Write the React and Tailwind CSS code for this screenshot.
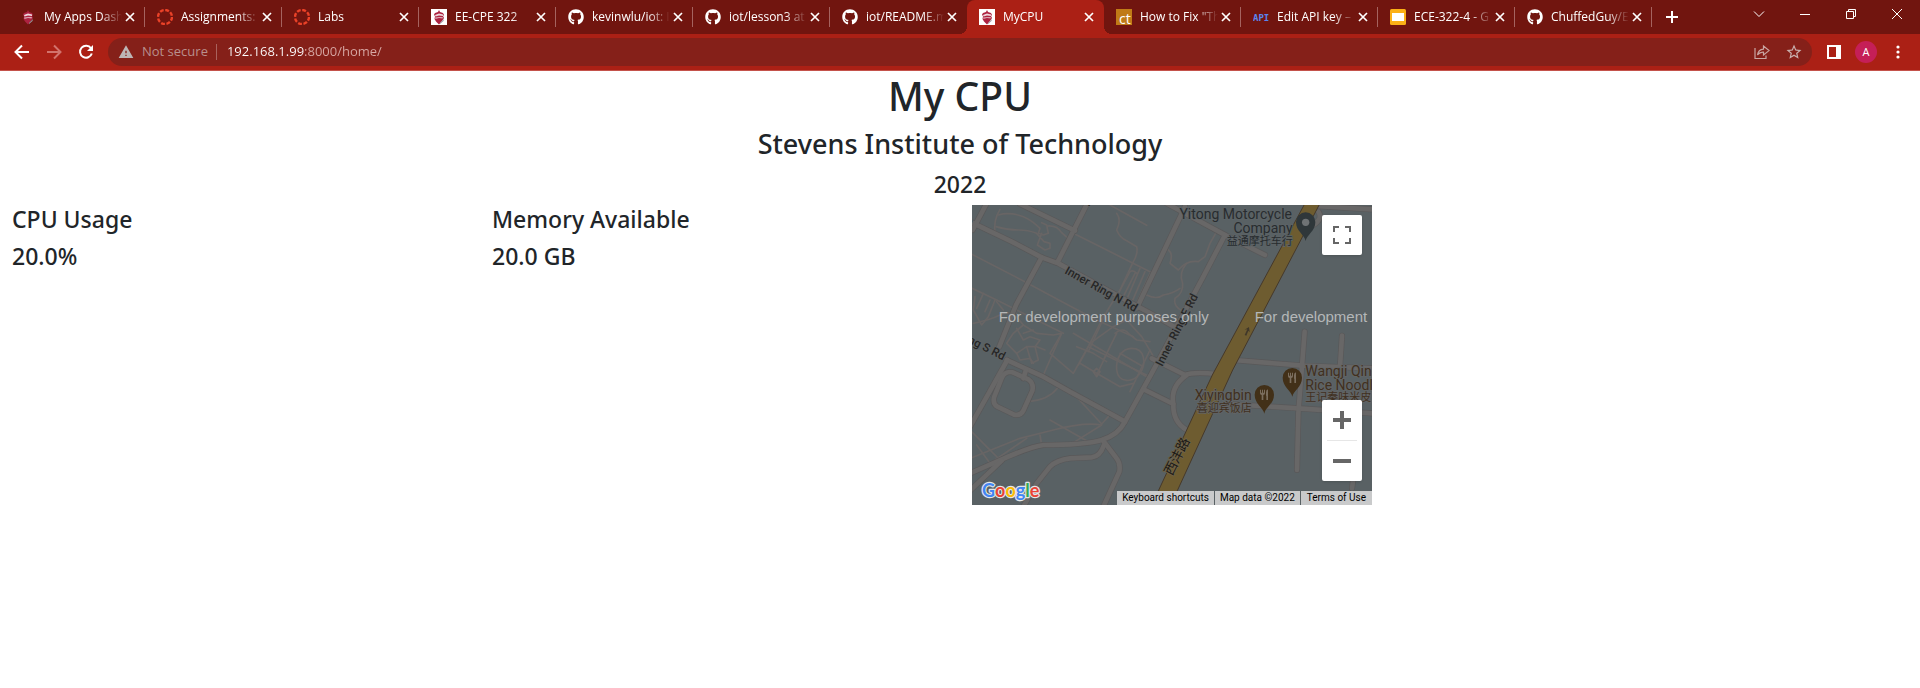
import { FaGithub } from "react-icons/fa";
import { MdWarning, MdStarBorder } from "react-icons/md";

const tabs = [
  { title: "My Apps Dash", icon: "shield" },
  { title: "Assignments:", icon: "canvas" },
  { title: "Labs", icon: "canvas" },
  { title: "EE-CPE 322", icon: "stevens" },
  { title: "kevinwlu/iot: I", icon: "github" },
  { title: "iot/lesson3 at", icon: "github" },
  { title: "iot/README.m", icon: "github" },
  { title: "MyCPU", icon: "stevens", active: true },
  { title: 'How to Fix "Th', icon: "ct" },
  { title: "Edit API key –", icon: "api" },
  { title: "ECE-322-4 - G", icon: "slides" },
  { title: "ChuffedGuy/E", icon: "github" },
];

function Crest() {
  return (
    <>
      <path d="M8 1 9 3 12 4 13 6 12 7 13 9 11 12 8 15.500 5 12.500 3.500 10 4 7.500 3 5.500 4 4 7 3Z" fill="#ad2240" />
      <path d="M4 6 8 4.500 12 5.500 12 7 8 6.500 4.500 7.500Z" fill="#efd9dd" />
      <path d="M4 8.500 8 8 12 8 11.500 9.500 8 9 4.500 10Z" fill="#d9a3ae" />
      <path d="M9 14 13 10 12.500 12 9 15Z" fill="#9a9ca3" />
    </>
  );
}

function Favicon({ kind }) {
  if (kind === "github") return <FaGithub className="size-4 shrink-0 text-white" aria-hidden="true" />;
  return (
    <svg viewBox="0 0 16 16" className="size-4 shrink-0" aria-hidden="true">
      {kind === "shield" && <Crest />}
      {kind === "stevens" && (
        <>
          <rect width="16" height="16" fill="#fff" />
          <Crest />
        </>
      )}
      {kind === "canvas" && (
        <circle cx="8" cy="8" r="7" fill="none" stroke="#ea4228" strokeWidth="2.400" strokeDasharray="3.900 1.600" />
      )}
      {kind === "ct" && (
        <>
          <rect width="16" height="16" fill="#c07a17" />
          <text x="3" y="15" fontSize="14" fill="#fff" fontFamily="Open Sans, sans-serif">ct</text>
        </>
      )}
      {kind === "api" && (
        <text x="0" y="12" fontSize="9" fontWeight="700" fill="#5a85ee" fontFamily="DejaVu Sans Mono, monospace">API</text>
      )}
      {kind === "slides" && (
        <>
          <rect width="16" height="16" rx="1.500" fill="#fbb016" />
          <rect x="2" y="4" width="12" height="8" fill="#fff" />
        </>
      )}
    </svg>
  );
}

function Tab({ title, icon, active, divided }) {
  return (
    <div
      role="tab"
      aria-selected={!!active}
      className={
        active
          ? "relative flex h-full w-[137px] items-center rounded-t-lg bg-[#ab2015] pr-[7px] pl-3"
          : "relative flex h-full w-[137px] items-center pr-[7px] pl-3"
      }
    >
      <Favicon kind={icon} />
      <span className="ml-2 flex-1 overflow-hidden text-xs whitespace-nowrap [mask-image:linear-gradient(to_right,black_72%,transparent)]">
        {title}
      </span>
      <button type="button" aria-label={"Close " + title} className="flex size-4 shrink-0 items-center justify-center">
        <svg viewBox="0 0 10 10" className="size-[10px]">
          <path d="M1 1 9 9M9 1 1 9" stroke="#fff" strokeWidth="1.700" />
        </svg>
      </button>
      {divided && <span className="absolute top-[7px] right-0 h-5 w-px bg-[#a5635f]" />}
      {active && (
        <>
          <span className="absolute bottom-0 -left-2 size-2 bg-[radial-gradient(circle_at_0_0,transparent_8px,#ab2015_8px)]" />
          <span className="absolute -right-2 bottom-0 size-2 bg-[radial-gradient(circle_at_100%_0,transparent_8px,#ab2015_8px)]" />
        </>
      )}
    </div>
  );
}

function WindowButton({ label, children }) {
  return (
    <button type="button" aria-label={label} className="flex h-7 w-[46px] items-center justify-center">
      <svg viewBox="0 0 12 12" className="size-3" fill="none" stroke="#fff" strokeWidth="1">
        {children}
      </svg>
    </button>
  );
}

function TabStrip() {
  return (
    <div className="flex h-[34px] bg-[#71150f] pl-2">
      <div role="tablist" className="flex">
        {tabs.map((t, i) => (
          <Tab key={i} {...t} divided={!t.active && !(tabs[i + 1] && tabs[i + 1].active)} />
        ))}
      </div>
      <button type="button" aria-label="New tab" className="flex w-10 items-center justify-center">
        <svg viewBox="0 0 12 12" className="size-3">
          <path d="M6 0V12M0 6H12" stroke="#fff" strokeWidth="2" />
        </svg>
      </button>
      <div className="ml-auto flex">
        <WindowButton label="Search tabs"><path d="M1 3.500 6 8.500 11 3.500" /></WindowButton>
        <WindowButton label="Minimize"><path d="M1 6.500H11" /></WindowButton>
        <WindowButton label="Restore">
          <path d="M1.500 3.500h7v7h-7zM3.500 3.500v-2h7v7h-2" />
        </WindowButton>
        <WindowButton label="Close window"><path d="M1 1 11 11M11 1 1 11" /></WindowButton>
      </div>
    </div>
  );
}

function Toolbar() {
  return (
    <div className="flex h-[37px] items-center border-b border-[#c4524b] bg-[#ab2015] px-[6px]">
      <button type="button" aria-label="Back" className="flex size-8 items-center justify-center">
        <svg viewBox="0 0 16 16" className="size-4" fill="none" stroke="#fff" strokeWidth="2">
          <path d="M15 8H2M8 1.500 1.500 8 8 14.500" />
        </svg>
      </button>
      <button type="button" aria-label="Forward" className="flex size-8 items-center justify-center">
        <svg viewBox="0 0 16 16" className="size-4" fill="none" stroke="#d2736c" strokeWidth="2">
          <path d="M1 8H14M8 1.500 14.500 8 8 14.500" />
        </svg>
      </button>
      <button type="button" aria-label="Reload" className="flex size-8 items-center justify-center">
        <svg viewBox="0 0 16 16" className="size-4" fill="none" stroke="#fff" strokeWidth="2">
          <path d="M13 4.300A6 6 0 1 0 13.800 9.500" />
          <path d="M15 1V7H9Z" fill="#fff" stroke="none" />
        </svg>
      </button>
      <div className="ml-[6px] flex h-7 flex-1 items-center rounded-full bg-[#852019] pr-[2px] pl-[10px]">
        <MdWarning className="size-4 text-[#bdb5b5]" aria-hidden="true" />
        <span className="ml-2 text-[13px] text-[#b98f8c]">Not secure</span>
        <span className="mr-[10px] ml-2 h-4 w-px bg-[#a9625d]" />
        <input
          type="text"
          aria-label="Address"
          defaultValue="192.168.1.99:8000/home/"
          className="min-w-0 flex-1 bg-[linear-gradient(to_right,#fff_78px,#d8a9a5_78px)] bg-clip-text text-[13px] text-transparent outline-none"
        />
        <button type="button" aria-label="Share" className="flex size-8 items-center justify-center">
          <svg viewBox="0 0 16 16" className="size-4" fill="none" stroke="#c9a5a2" strokeWidth="1.200">
            <path d="M1 4V14.500H12V11.500" />
            <path d="M3.500 11C4 7.500 6 5.500 9.500 5.200V2L15 6.600 9.500 11V8.200C7 8 5 9 3.500 11Z" />
          </svg>
        </button>
        <button type="button" aria-label="Bookmark this tab" className="flex size-8 items-center justify-center">
          <MdStarBorder className="size-[18px] text-[#c9b0ae]" />
        </button>
      </div>
      <button type="button" aria-label="Side panel" className="ml-[6px] flex size-8 items-center justify-center">
        <svg viewBox="0 0 14 14" className="size-[14px]">
          <path d="M0 0H14V14H0ZM2 2V12H9V2Z" fill="#fff" fillRule="evenodd" />
        </svg>
      </button>
      <button type="button" aria-label="Profile" className="mx-[5px] flex size-[22px] items-center justify-center rounded-full bg-[#c51f57] text-[11px] text-white">
        A
      </button>
      <button type="button" aria-label="Menu" className="flex size-8 items-center justify-center">
        <svg viewBox="0 0 4 14" className="h-[14px] w-1" fill="#fff">
          <circle cx="2" cy="2" r="1.600" />
          <circle cx="2" cy="7" r="1.600" />
          <circle cx="2" cy="12" r="1.600" />
        </svg>
      </button>
    </div>
  );
}

const wideRoads = [
  "M0 65 125 125 215 172 265 190 500 318 560 350 615 382",
  "M50 10 8 90",
  "M352 10 262 188",
  "M215 172 138 315 88 440",
  "M150 12 315 92",
  "M645 20 500 325",
  "M590 10 765 105 885 165",
  "M765 105 700 230 545 520 465 665Q445 705 395 720Q345 735 220 735 180 740 80 785L0 820",
  "M110 480 220 530 300 575 465 665",
  "M112 480 0 680",
  "M398 720 440 775Q452 790 448 815L400 920",
  "M402 735Q390 770 365 772L300 775Q260 780 240 800L200 850 160 920",
  "M95 782 0 872",
  "M128 517 175 538Q192 550 187 572L160 632Q152 648 132 644L82 620Q68 612 72 592L96 532Q106 512 128 517Z",
  "M160 535 168 510",
  "M545 475 645 525Q670 515 740 522",
  "M525 570 610 612",
  "M650 525Q600 560 610 612 608 665 650 690",
  "M790 480 1000 497 1206 505",
  "M790 613 985 625 1206 640",
  "M1004 395 985 640 981 810",
  "M1116 407 1110 500",
  "M1150 835 1146 865",
  "M1035 18 1206 28",
  "M1030 75Q1060 55 1045 35",
];

const thinRoads = [
  "M90 28Q70 60 75 100",
  "M85 45Q120 35 160 50 185 60 210 85L205 100 220 105 235 100 230 75 215 68",
  "M78 80Q110 90 145 90 175 90 200 100L222 125 240 130 240 145 225 150 202 135 215 100",
  "M232 78Q260 75 275 98L300 120",
  "M420 15 530 76",
  "M440 40Q455 60 440 90 450 115 470 122L500 140Q505 160 490 185L450 270 410 335 355 455",
  "M310 100 400 145 480 185 540 215",
  "M0 160 170 248 300 318 380 360 490 410",
  "M0 262 80 300 150 335 280 400",
  "M480 215 440 290M495 220 460 290M510 205 465 310M525 215 480 320M540 220 490 330M480 215Q490 208 500 220",
  "M595 150Q610 160 600 190L625 210Q650 180 685 185L705 170 720 130 740 95",
  "M650 190Q625 220 638 250 640 280 615 295 608 320 640 335",
  "M530 285Q560 300 580 285 610 280 630 265",
  "M10 370Q60 360 90 345 110 335 140 340",
  "M15 290 10 330 35 375 55 350 75 300M40 280 20 325M60 300 45 335M80 305 100 330",
  "M140 350 160 375 130 400 110 430 140 460 170 440 195 440 210 420 180 410 160 420 140 385",
  "M160 375 200 400 250 405 275 400 220 525M160 400 190 390M170 440 185 490 205 480 195 440M200 440 225 450",
  "M140 460 150 480 180 475 190 490",
  "M275 400 240 460 310 520 360 430 430 380M310 400 530 530",
  "M355 440 540 530M330 490 380 520 450 560 490 550",
  "M405 340 350 450 325 495M430 380 470 360 515 410 545 460 560 490",
  "M435 400Q460 380 475 400L500 420 540 425",
  "M400 480 440 400M380 525 430 420M480 575 540 450M450 460 520 500",
  "M485 445C525 445 530 490 510 520C490 550 445 550 440 510C437 475 455 445 485 445Z",
  "M370 515 380 530 390 515 380 505Z",
  "M175 605Q235 600 262 565",
  "M310 580 395 672 415 650M240 660 355 725",
  "M395 675 315 725M395 675Q345 665 250 690L150 715 0 775",
  "M0 690 90 780M20 735 60 790M210 705 215 735M170 715 75 780",
  "M320 440 370 460 410 485",
];

function MapPin({ x, y, children, fill }) {
  return (
    <g transform={`translate(${x} ${y})`}>
      <path d="M0 57C-3 38-29 28-29 0A29 29 0 1 1 29 0C29 28 3 38 0 57Z" fill={fill} />
      {children}
    </g>
  );
}

function Cutlery() {
  return (
    <path
      d="M-13 -15v11q0 5 5 5v15h5v-15q5 0 5-5v-11h-3v9h-3v-9h-3v9h-3v-9zM6 16h5v-32q-6 2-6 9v10h1z"
      fill="#7a6d5d"
    />
  );
}

function MapDrawing() {
  return (
    <svg viewBox="6 15 1200 900" className="block size-full" role="img" aria-label="Street map">
      <rect x="6" y="15" width="1200" height="900" fill="#596164" />
      <g fill="none" strokeLinecap="round" strokeLinejoin="round">
        <g stroke="#686565" strokeWidth="5">
          {thinRoads.map((d) => <path key={d} d={d} />)}
        </g>
        <g stroke="#595859" strokeWidth="18">
          {wideRoads.map((d) => <path key={d} d={d} />)}
        </g>
        <g stroke="#686767" strokeWidth="14">
          {wideRoads.map((d) => <path key={d} d={d} />)}
        </g>
      </g>
      <path d="M1005 10 727 525 543 920H600L788 510 1050 10Z" fill="#6e5c30" stroke="#46392a" strokeWidth="3" />
      <path d="M824 405 832 388 824 389 837 381 839 397 835 392 829 407Z" fill="#40382a" />

      <g fontFamily="Roboto, sans-serif" fontSize="35" fontWeight="500" fill="#262626" stroke="#5f6364" strokeWidth="5" paintOrder="stroke">
        <text transform="translate(282 219) rotate(29)">Inner Ring N Rd</text>
        <text transform="translate(577 501) rotate(-63)">Inner Ring E Rd</text>
        <text transform="translate(-8 427) rotate(27)">ng S Rd</text>
        <text transform="translate(339 8) rotate(29)">N</text>
        <text transform="translate(-3 66) rotate(-63)">y</text>
      </g>
      <g fontFamily="'Noto Sans CJK SC', sans-serif" fontSize="40" fill="#1c1a17" stroke="#6e6248" strokeWidth="5" paintOrder="stroke">
        <text transform="translate(606 829) rotate(-63)">西沣路</text>
      </g>

      <g fontFamily="Roboto, 'Noto Sans CJK SC', sans-serif" fontSize="42" fill="#282c2f" stroke="#5c6366" strokeWidth="5" paintOrder="stroke" textAnchor="end">
        <text x="966" y="57">Yitong Motorcycle</text>
        <text x="968" y="99">Company</text>
        <text x="968" y="136" fontSize="33">益通摩托车行</text>
      </g>
      <g fontFamily="Roboto, 'Noto Sans CJK SC', sans-serif" fontSize="42" fill="#40301f" stroke="#626465" strokeWidth="5" paintOrder="stroke">
        <text x="845" y="600" textAnchor="end">Xiyingbin</text>
        <text x="845" y="635" fontSize="33" textAnchor="end">喜迎宾饭店</text>
        <text x="1006" y="529">Wangji Qin</text>
        <text x="1006" y="571">Rice Noodl</text>
        <text x="1006" y="602" fontSize="33">王记秦味米皮</text>
      </g>

      <MapPin x="1007" y="66" fill="#2f373a"><circle cx="0" cy="1" r="11" fill="#6f7375" /></MapPin>
      <MapPin x="967" y="533" fill="#423018"><Cutlery /></MapPin>
      <MapPin x="883" y="584" fill="#423018"><Cutlery /></MapPin>

      <g fontFamily="'Liberation Sans', Arial, sans-serif" fontSize="45" fill="#b4b7b8">
        <text x="86" y="367">For development purposes only</text>
        <text x="854" y="367">For development</text>
      </g>

      <g fontFamily="Lato, sans-serif" fontSize="54" fontWeight="700" stroke="#e4e6e7" strokeWidth="7" strokeLinejoin="round" paintOrder="stroke">
        <text x="36" y="890">
          <tspan fill="#4285f4">G</tspan><tspan fill="#ea4335">o</tspan><tspan fill="#fbbc05">o</tspan><tspan fill="#4285f4">g</tspan><tspan fill="#34a853">l</tspan><tspan fill="#ea4335">e</tspan>
        </text>
      </g>
    </svg>
  );
}

function MapCard() {
  return (
    <div className="relative aspect-[4/3] w-[400px] max-w-full overflow-hidden">
      <MapDrawing />
      <button type="button" aria-label="Toggle fullscreen view" className="absolute top-[10px] right-[10px] flex size-10 items-center justify-center rounded-xs bg-white shadow">
        <svg viewBox="0 0 18 18" className="size-[18px]" fill="none" stroke="#666" strokeWidth="2">
          <path d="M1 6V1H6M12 1H17V6M17 12V17H12M6 17H1V12" />
        </svg>
      </button>
      <div className="absolute right-[10px] bottom-6 flex w-10 flex-col items-center rounded-xs bg-white shadow">
        <button type="button" aria-label="Zoom in" className="flex size-10 items-center justify-center">
          <svg viewBox="0 0 18 18" className="size-[18px]"><path d="M9 0V18M0 9H18" stroke="#666" strokeWidth="4" /></svg>
        </button>
        <span className="h-px w-[30px] bg-[#e6e6e6]" />
        <button type="button" aria-label="Zoom out" className="flex size-10 items-center justify-center">
          <svg viewBox="0 0 18 18" className="size-[18px]"><path d="M0 9H18" stroke="#666" strokeWidth="4" /></svg>
        </button>
      </div>
      <div className="absolute right-0 bottom-0 flex h-[14px] gap-px font-[Roboto,sans-serif] text-[10px] leading-[14px] text-black">
        <button type="button" className="bg-[#c9cacb] px-[5px]">Keyboard shortcuts</button>
        <span className="bg-[#c9cacb] px-[5px]">Map data ©2022</span>
        <a href="#terms" className="bg-[#c9cacb] px-[6px]">Terms of Use</a>
      </div>
    </div>
  );
}

function Stat({ label, value }) {
  return (
    <section className="px-3 text-[23px] leading-[29px] font-medium">
      <h4 className="mb-2">{label}</h4>
      <p>{value}</p>
    </section>
  );
}

export default function App() {
  return (
    <div className="min-h-screen bg-white font-['Open_Sans',sans-serif] text-[#212529]">
      <header className="text-white">
        <TabStrip />
        <Toolbar />
      </header>
      <main className="font-['Noto_Sans',sans-serif]">
        <div className="text-center font-medium">
          <h1 className="mb-[6px] text-[39px] leading-[50px]">My CPU</h1>
          <h3 className="mb-2 text-[27px] leading-[34px]">Stevens Institute of Technology</h3>
          <h4 className="mb-[6px] text-[23px] leading-[30px]">2022</h4>
        </div>
        <div className="grid grid-cols-4">
          <Stat label="CPU Usage" value="20.0%" />
          <Stat label="Memory Available" value="20.0 GB" />
          <div className="col-span-2 px-3">
            <MapCard />
          </div>
        </div>
      </main>
    </div>
  );
}
